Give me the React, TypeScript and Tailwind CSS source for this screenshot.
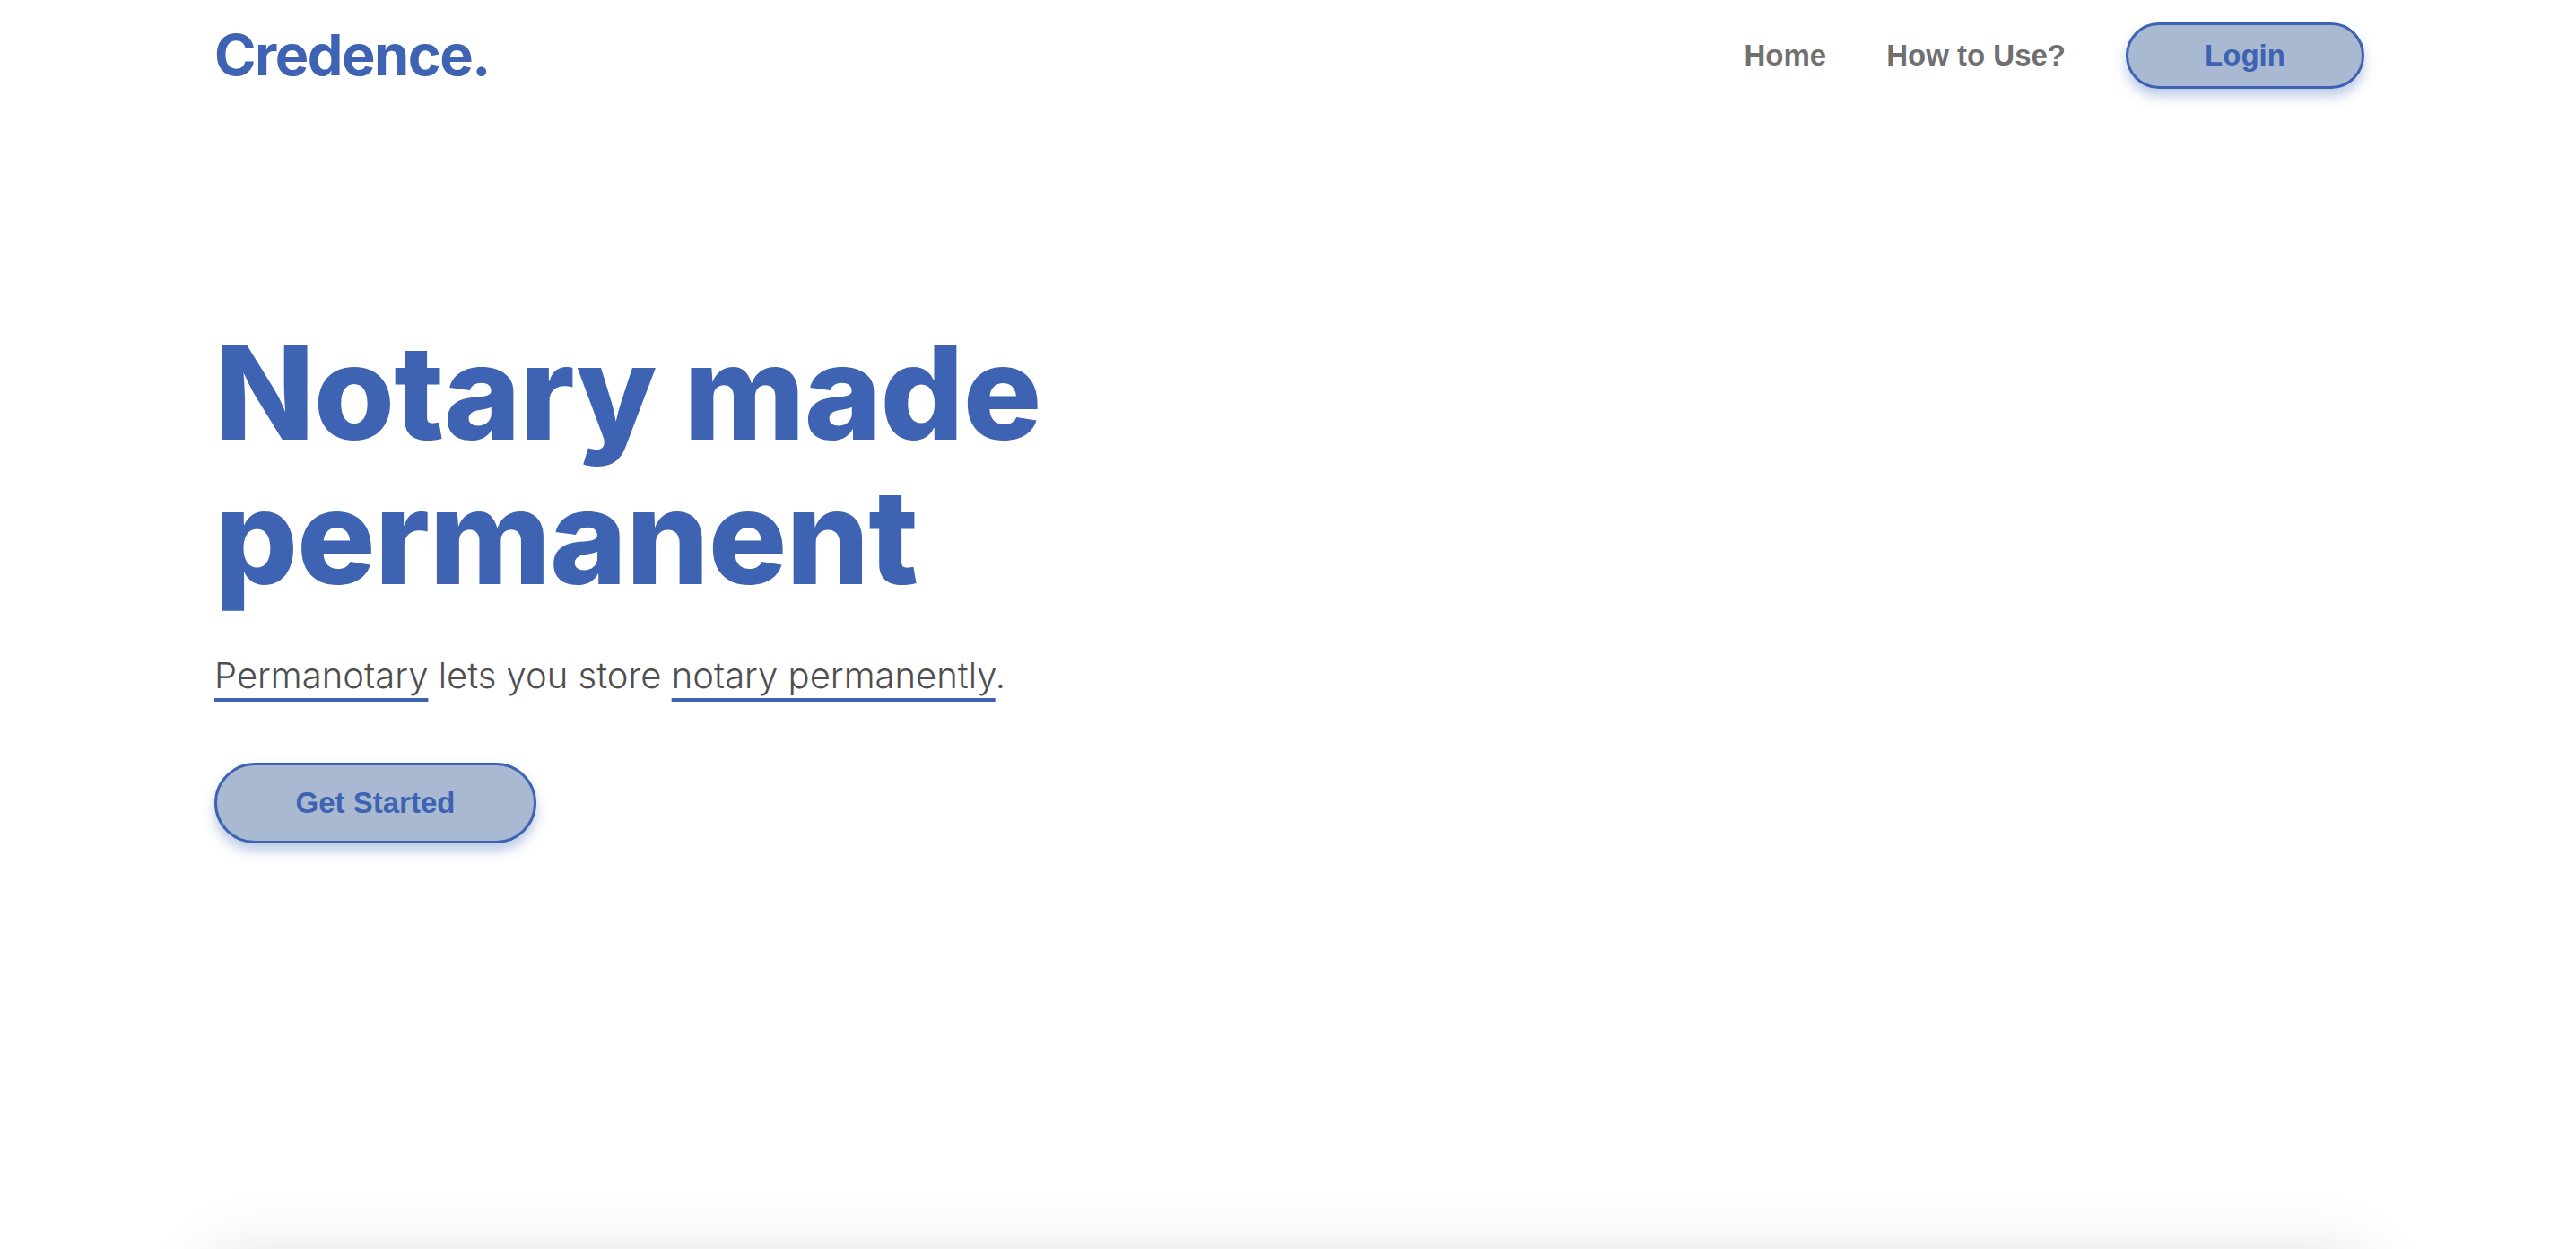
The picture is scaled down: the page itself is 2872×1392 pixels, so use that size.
import React from "react";

const BLUE = "text-[#3d63b2]";

function Header() {
  return (
    <header className="mx-auto flex h-[123px] w-[2400px] items-center justify-between pl-[3px]">
      <a href="#" className={`font-['Inter',sans-serif] text-[63px] font-bold leading-none tracking-[-1.5px] ${BLUE}`}>
        Credence.
      </a>
      <nav className="flex items-center gap-[67px] font-['Liberation_Sans',Arial,sans-serif] text-[33px] font-bold">
        <a href="#" className="text-[#707070]">Home</a>
        <a href="#" className="text-[#707070]">How to Use?</a>
        <button className="h-[74px] w-[266px] rounded-full border-[3px] border-[#3d63b2] bg-[#a9b9d1] text-[#3d63b2] shadow-[0_8px_14px_rgba(61,99,178,0.35)]">
          Login
        </button>
      </nav>
    </header>
  );
}

function Hero() {
  return (
    <section className="mx-auto h-[1277px] w-[2400px] pl-[3px] pt-[234px]">
      {/* Title */}
      <h1 className={`font-['Inter',sans-serif] text-[146px] font-extrabold leading-[161px] tracking-[-1px] ${BLUE}`}>
        Notary made
        <br />
        permanent
      </h1>

      <p className="mt-[42px] font-['Inter',sans-serif] text-[40px] font-light leading-[63px] text-[#4f4f4f]">
        <span className="underline decoration-[#3d63b2] decoration-[4px] underline-offset-[11px] [text-decoration-skip-ink:none]">
          Permanotary
        </span>{" "}
        lets you store{" "}
        <span className="underline decoration-[#3d63b2] decoration-[4px] underline-offset-[11px] [text-decoration-skip-ink:none]">
          notary permanently
        </span>
        .
      </p>

      <button className="mt-[66px] h-[90px] w-[359px] rounded-full border-[3px] border-[#3d63b2] bg-[#a9b9d1] font-['Liberation_Sans',Arial,sans-serif] text-[33px] font-bold text-[#3d63b2] shadow-[0_8px_14px_rgba(61,99,178,0.35)]">
        Get Started
      </button>
    </section>
  );
}

export default function App() {
  return (
    <div className="min-h-screen overflow-hidden bg-white">
      <Header />
      <Hero />
      {/* next section card, only its shadow shows */}
      <div className="mx-auto h-[600px] w-[2400px] bg-white shadow-[0_0_70px_rgba(0,0,0,0.13)]" />
    </div>
  );
}
